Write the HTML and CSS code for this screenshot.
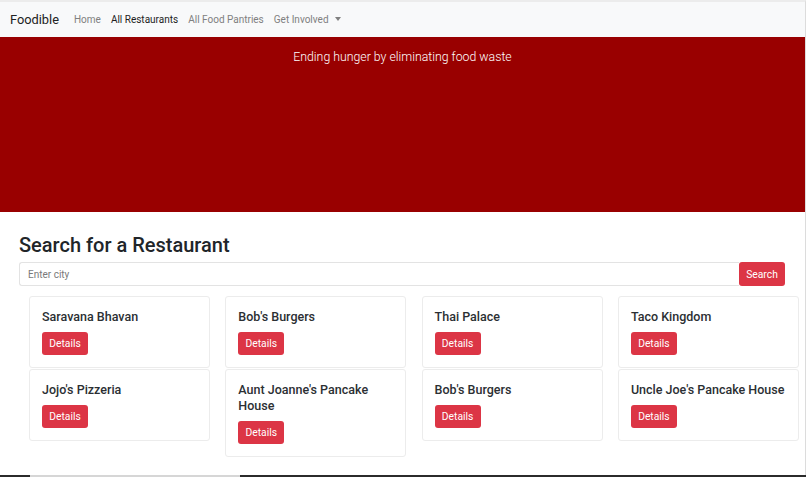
FILE: index.html
```html
<!DOCTYPE html>
<html lang="en">
<head>
  <meta charset="UTF-8" />
  <meta name="viewport" content="width=device-width, initial-scale=1.0" />
  <title>Foodible</title>
  <link rel="stylesheet" href="styles.css">
</head>
<body>
  <div class="page">
    <nav class="navbar">
      <a class="brand" href="#">Foodible</a>
      <ul class="nav">
        <li><a href="#">Home</a></li>
        <li><a class="active" href="#">All Restaurants</a></li>
        <li><a href="#">All Food Pantries</a></li>
        <li><a class="dropdown" href="#">Get Involved</a></li>
      </ul>
    </nav>

    <header class="hero">
      <p>Ending hunger by eliminating food waste</p>
    </header>

    <main class="container">
      <h2>Search for a Restaurant</h2>
      <div class="search">
        <input type="text" placeholder="Enter city" />
        <button>Search</button>
      </div>

      <div class="cards">
        <div class="card"><h5>Saravana Bhavan</h5><button>Details</button></div>
        <div class="card"><h5>Bob's Burgers</h5><button>Details</button></div>
        <div class="card"><h5>Thai Palace</h5><button>Details</button></div>
        <div class="card"><h5>Taco Kingdom</h5><button>Details</button></div>
        <div class="card"><h5>Jojo's Pizzeria</h5><button>Details</button></div>
        <div class="card"><h5>Aunt Joanne's Pancake House</h5><button>Details</button></div>
        <div class="card"><h5>Bob's Burgers</h5><button>Details</button></div>
        <div class="card"><h5>Uncle Joe's Pancake House</h5><button>Details</button></div>
      </div>
    </main>
  </div>
  <div class="taskbar"><span></span></div>
</body>
</html>
```

FILE: styles.css
```css
body {
  margin: 0;
  font-family: Roboto, "Open Sans", sans-serif;
  color: #212529;
  background: #fff;
}
.page {
  height: 473px;
  overflow: hidden;
  border-top: 2px solid #ececec;
  border-right: 1px solid #dcdcdc;
}
.navbar {
  display: flex;
  align-items: center;
  height: 35px;
  padding: 0 10px;
  background: #f8f9fa;
}
.brand {
  font-size: 12.8px;
  color: #222;
  text-decoration: none;
  margin-right: 10px;
}
.nav {
  display: flex;
  list-style: none;
  margin: 0;
  padding: 0;
}
.nav a {
  display: block;
  padding: 0 5px;
  font-size: 10px;
  color: #808080;
  text-decoration: none;
}
.nav a.active {
  color: #1d1d1d;
}
.dropdown::after {
  content: "";
  display: inline-block;
  margin-left: 6px;
  vertical-align: 2px;
  border-top: 4px solid #808080;
  border-left: 3px solid transparent;
  border-right: 3px solid transparent;
}
.hero {
  height: 175px;
  background: #990000;
  color: #fff;
  text-align: center;
}
.hero p {
  margin: 0;
  padding-top: 13px;
  font-size: 12.3px;
  font-weight: 300;
}
.container {
  padding: 0 20px 0 19px;
}
h2 {
  margin: 20px 0 4px;
  font-size: 20px;
  font-weight: 500;
  line-height: 26px;
}
.search {
  display: flex;
  height: 24px;
}
.search input {
  flex: 1;
  min-width: 0;
  height: 24px;
  box-sizing: border-box;
  border: 1px solid #e3e3e3;
  border-right: none;
  border-radius: 3px 0 0 3px;
  padding: 0 8px;
  font-family: inherit;
  font-size: 10px;
  color: #495057;
}
.search input::placeholder {
  color: #7a7a7a;
}
button {
  border: none;
  background: #dc3545;
  color: #fff;
  font-family: inherit;
  font-size: 10.3px;
  border-radius: 3px;
  cursor: pointer;
}
.search button {
  width: 46px;
  height: 24px;
  padding: 0;
}
.cards {
  display: grid;
  grid-template-columns: repeat(4, 181px);
  column-gap: 15.3px;
  row-gap: 1px;
  align-items: start;
  margin: 10px 0 0 10px;
}
.card {
  border: 1px solid #ececec;
  border-radius: 3px;
  padding: 12px;
}
.card h5 {
  margin: 0 0 7px;
  font-size: 12.5px;
  font-weight: 500;
  line-height: 16px;
  color: #2b2f33;
}
.card button {
  display: block;
  width: 46px;
  height: 23px;
  padding: 0;
}
.taskbar {
  height: 2px;
  background: #2b2b2b;
}
.taskbar span {
  display: block;
  margin-left: 30px;
  width: 210px;
  height: 2px;
  background: #d6d6d6;
}
```
